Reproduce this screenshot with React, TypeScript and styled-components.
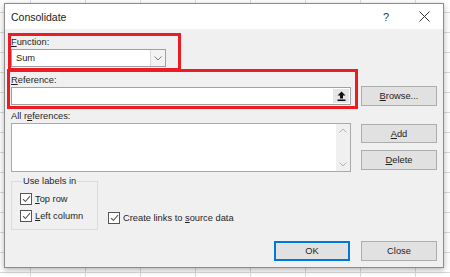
import React from "react";
import styled, { createGlobalStyle } from "styled-components";

const GlobalStyle = createGlobalStyle`
  html, body {
    margin: 0;
    padding: 0;
  }
  body {
    width: 450px;
    height: 277px;
    overflow: hidden;
    background-color: #ffffff;
    background-image:
      linear-gradient(to right, #dadada 1px, transparent 1px),
      linear-gradient(to bottom, #dadada 1px, transparent 1px);
    background-size: 55px 20px;
    background-position: 30px 12px;
    font-family: "Liberation Sans", Arial, sans-serif;
    color: #1e1e1e;
  }
  #root {
    padding: 3px 0 0 4px;
  }
`;

const Dialog = styled.div`
  position: relative;
  box-sizing: border-box;
  width: 440px;
  height: 265px;
  border: 1px solid #8c8c8c;
  background: #f0f0f0;
  box-shadow: 0 2px 6px rgba(0, 0, 0, 0.3);
  display: flex;
  flex-direction: column;
`;

const TitleBar = styled.div`
  height: 25px;
  background: #ffffff;
  display: flex;
  align-items: center;
  padding-left: 6px;
`;

const Title = styled.span`
  font-size: 10.5px;
  color: #222;
`;

const TitleButtons = styled.div`
  margin-left: auto;
  display: flex;
  height: 100%;
`;

const TitleButton = styled.div`
  width: 38px;
  height: 100%;
  display: flex;
  align-items: center;
  justify-content: center;
  font-size: 11px;
  color: #333;
`;

const Body = styled.div`
  flex: 1;
  display: flex;
  flex-direction: column;
  padding: 0 6px 6px 6px;
  font-size: 9.3px;
`;

const FieldLabel = styled.div<{ $top: number }>`
  height: 12px;
  line-height: 12px;
  margin-top: ${(p) => p.$top}px;
  white-space: nowrap;
`;

const Key = styled.span`
  text-decoration: underline;
  text-underline-offset: 1px;
`;

const Combo = styled.div`
  box-sizing: border-box;
  margin-top: 1px;
  width: 155px;
  height: 18px;
  border: 1px solid #a0a0a0;
  background: #ffffff;
  display: flex;
  align-items: center;
`;

const ComboValue = styled.span`
  flex: 1;
  padding-left: 4px;
  line-height: 16px;
`;

const ComboArrow = styled.div`
  width: 14px;
  height: 100%;
  border-left: 1px solid #dcdcdc;
  background: #f3f3f3;
  display: flex;
  align-items: center;
  justify-content: center;
`;

const Row = styled.div<{ $top?: number; $align?: string }>`
  display: flex;
  align-items: ${(p) => p.$align || "center"};
  gap: 10px;
  margin-top: ${(p) => p.$top || 0}px;
`;

const TextBox = styled.div`
  box-sizing: border-box;
  width: 340px;
  height: 18px;
  border: 1px solid #a0a0a0;
  background: #ffffff;
  display: flex;
  justify-content: flex-end;
  padding: 1px;
`;

const CollapseButton = styled.div`
  width: 16px;
  height: 100%;
  background: #e6e6e6;
  display: flex;
  align-items: center;
  justify-content: center;
`;

const Button = styled.div<{ $primary?: boolean; $height?: number }>`
  box-sizing: border-box;
  width: 76px;
  height: ${(p) => p.$height || 20}px;
  border: 1px solid ${(p) => (p.$primary ? "#0078d7" : "#adadad")};
  box-shadow: ${(p) => (p.$primary ? "inset 0 0 0 1px #0078d7" : "none")};
  background: #e1e1e1;
  display: flex;
  align-items: center;
  justify-content: center;
  font-size: 9.3px;
  color: #1e1e1e;
`;

const ListBox = styled.div`
  box-sizing: border-box;
  width: 340px;
  height: 49px;
  border: 1px solid #a9a9a9;
  background: #ffffff;
  display: flex;
  justify-content: flex-end;
`;

const ScrollBar = styled.div`
  width: 14px;
  background: #f0f0f0;
  display: flex;
  flex-direction: column;
  justify-content: space-between;
  align-items: center;
  padding: 4px 0;
`;

const ButtonColumn = styled.div`
  display: flex;
  flex-direction: column;
  gap: 7px;
  margin-top: 1px;
`;

const GroupBox = styled.fieldset`
  box-sizing: border-box;
  margin: 0;
  width: 87px;
  height: 55px;
  border: 1px solid #dcdcdc;
  padding: 6px 0 0 8px;
  display: flex;
  flex-direction: column;
  gap: 5px;
`;

const Legend = styled.legend`
  padding: 0 1px;
  margin-left: 2px;
  line-height: 12px;
  font-size: 9.3px;
`;

const CheckRow = styled.div`
  display: flex;
  align-items: center;
  gap: 3px;
  height: 12px;
  white-space: nowrap;
`;

const CheckBox = styled.span`
  box-sizing: border-box;
  width: 12px;
  height: 12px;
  border: 1px solid #555;
  background: #ffffff;
  display: flex;
  align-items: center;
  justify-content: center;
`;

const SourceLinks = styled(CheckRow)`
  align-self: flex-end;
  margin-bottom: 6px;
`;

const Footer = styled.div`
  margin-top: auto;
  display: flex;
  justify-content: flex-end;
  gap: 11px;
`;

const Highlight = styled.div<{ $left: number; $top: number; $width: number; $height: number }>`
  position: absolute;
  box-sizing: border-box;
  left: ${(p) => p.$left}px;
  top: ${(p) => p.$top}px;
  width: ${(p) => p.$width}px;
  height: ${(p) => p.$height}px;
  border: 3px solid #ec1c24;
  pointer-events: none;
`;

const Check = () => (
  <CheckBox>
    <svg width="9" height="8" viewBox="0 0 9 8">
      <path d="M1 4.2 L3.4 6.5 L8 1.2" fill="none" stroke="#5a5a5a" strokeWidth="1.1" />
    </svg>
  </CheckBox>
);

const Chevron = ({ up }: { up?: boolean }) => (
  <svg width="8" height="5" viewBox="0 0 8 5">
    <path
      d={up ? "M0.5 4.5 L4 1 L7.5 4.5" : "M0.5 0.5 L4 4 L7.5 0.5"}
      fill="none"
      stroke={up ? "#b4b4b4" : "#7a7a7a"}
      strokeWidth="1"
    />
  </svg>
);

export default function App() {
  return (
    <>
      <GlobalStyle />
      <Dialog>
        <TitleBar>
          <Title>Consolidate</Title>
          <TitleButtons>
            <TitleButton>?</TitleButton>
            <TitleButton>
              <svg width="11" height="11" viewBox="0 0 11 11">
                <path d="M0.5 0.5 L10.5 10.5 M10.5 0.5 L0.5 10.5" stroke="#333" strokeWidth="1" />
              </svg>
            </TitleButton>
          </TitleButtons>
        </TitleBar>
        <Body>
          <FieldLabel $top={7}>
            <Key>F</Key>unction:
          </FieldLabel>
          <Combo>
            <ComboValue>Sum</ComboValue>
            <ComboArrow>
              <Chevron />
            </ComboArrow>
          </Combo>

          <FieldLabel $top={7}>
            <Key>R</Key>eference:
          </FieldLabel>
          <Row>
            <TextBox>
              <CollapseButton>
                <svg width="9" height="10" viewBox="0 0 9 10">
                  <path d="M4.5 0.5 L8.5 4.5 L6 4.5 L6 7.5 L3 7.5 L3 4.5 L0.5 4.5 Z" fill="#111" />
                  <rect x="0.5" y="8.5" width="8" height="1.5" fill="#111" />
                </svg>
              </CollapseButton>
            </TextBox>
            <Button>
              <span>
                <Key>B</Key>rowse...
              </span>
            </Button>
          </Row>

          <FieldLabel $top={4}>
            All r<Key>e</Key>ferences:
          </FieldLabel>
          <Row $top={1} $align="flex-start">
            <ListBox>
              <ScrollBar>
                <Chevron up />
                <svg width="8" height="5" viewBox="0 0 8 5">
                  <path d="M0.5 0.5 L4 4 L7.5 0.5" fill="none" stroke="#b4b4b4" strokeWidth="1" />
                </svg>
              </ScrollBar>
            </ListBox>
            <ButtonColumn>
              <Button $height={19}>
                <span>
                  <Key>A</Key>dd
                </span>
              </Button>
              <Button>
                <span>
                  <Key>D</Key>elete
                </span>
              </Button>
            </ButtonColumn>
          </Row>

          <Row $top={3} $align="stretch">
            <GroupBox>
              <Legend>Use labels in</Legend>
              <CheckRow>
                <Check />
                <span>
                  <Key>T</Key>op row
                </span>
              </CheckRow>
              <CheckRow>
                <Check />
                <span>
                  <Key>L</Key>eft column
                </span>
              </CheckRow>
            </GroupBox>
            <SourceLinks>
              <Check />
              <span>
                Create links to <Key>s</Key>ource data
              </span>
            </SourceLinks>
          </Row>

          <Footer>
            <Button $primary>OK</Button>
            <Button>Close</Button>
          </Footer>
        </Body>
        <Highlight $left={3} $top={29} $width={173} $height={38} />
        <Highlight $left={2} $top={65} $width={351} $height={40} />
      </Dialog>
    </>
  );
}
